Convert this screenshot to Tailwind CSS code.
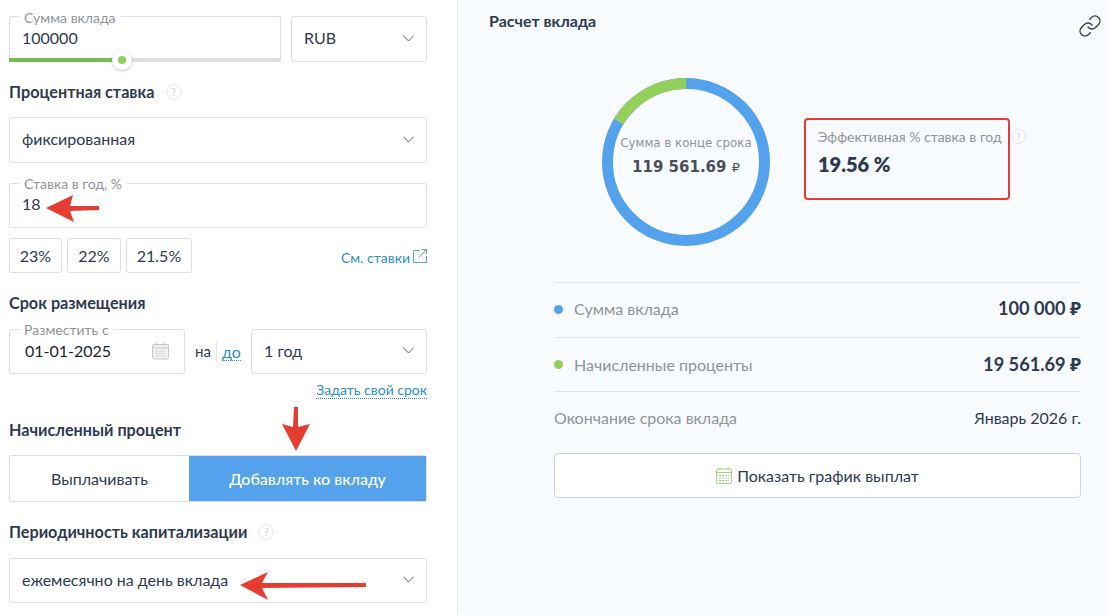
<!DOCTYPE html>
<html lang="ru">
<head>
<meta charset="utf-8">
<title>Расчет вклада</title>
<script src="https://cdn.jsdelivr.net/npm/@tailwindcss/browser@4"></script>
</head>
<body class="bg-white overflow-hidden text-[#2e3a4f] font-['Lato','Noto_Sans',sans-serif]">
<div class="relative flex w-[1109px] h-[615px] overflow-hidden">

  <!-- left form -->
  <div class="w-[458px] h-full shrink-0 pl-[9px] pr-[30px] pt-[16px] border-r border-[#e6e9ee]">
    <div class="flex gap-[10px]">
      <div class="relative w-[272px] h-[46px] border border-[#dcdfe4] border-b-0 rounded-t-[3px] pl-[12px] pt-[10px] text-[16px] leading-[22px]">
        <span class="absolute left-[9px] -top-[6px] bg-white px-[5px] text-[14px] leading-[14px] text-[#8f949c]">Сумма вклада</span>
        100000
        <div class="absolute -left-px right-[-1px] bottom-0 h-[4px] bg-[#dcdfe4]"></div>
        <div class="absolute -left-px bottom-0 w-[113px] h-[4px] bg-[#76bd51]"></div>
        <div class="absolute left-[102px] bottom-[-8px] w-[20px] h-[20px] rounded-full bg-white shadow-[0_1px_3px_rgba(120,80,140,0.4)] flex items-center justify-center">
          <div class="w-[8px] h-[8px] rounded-full bg-[#94cf5c]"></div>
        </div>
      </div>
      <div class="w-[136px] h-[46px] pb-[2px] border border-[#dcdfe4] rounded-[3px] pl-[12px] pr-[12px] flex items-center justify-between text-[16px]">
        RUB
        <svg width="11" height="7" viewBox="0 0 11 7" fill="none" stroke="#5b6472" stroke-width="1"><path d="M0.5 0.8 5.5 6 10.5 0.8"/></svg>
      </div>
    </div>

    <div class="flex items-center gap-[11px] mt-[20px] h-[20px] text-[16.2px] font-bold">
      Процентная ставка
      <span class="w-[16px] h-[16px] rounded-full border border-[#e2e4e8] text-[11px] font-normal leading-[14px] text-center text-[#d5d8dd]">?</span>
    </div>

    <div class="mt-[15px] h-[46px] pb-[2px] border border-[#dcdfe4] rounded-[3px] pl-[12px] pr-[12px] flex items-center justify-between text-[16px]">
      фиксированная
      <svg width="11" height="7" viewBox="0 0 11 7" fill="none" stroke="#5b6472" stroke-width="1"><path d="M0.5 0.8 5.5 6 10.5 0.8"/></svg>
    </div>

    <div class="relative mt-[20px] h-[45px] border border-[#dcdfe4] rounded-[3px] pl-[12px] pt-[9px] text-[16px] leading-[22px]">
      <span class="absolute left-[9px] -top-[7px] bg-white px-[5px] text-[14px] leading-[14px] text-[#8f949c]">Ставка в год, %</span>
      18
    </div>

    <div class="flex items-center gap-[5px] mt-[10px] text-[16px]">
      <div class="w-[53px] h-[35px] border border-[#dcdfe4] rounded-[3px] flex items-center justify-center">23%</div>
      <div class="w-[54px] h-[35px] border border-[#dcdfe4] rounded-[3px] flex items-center justify-center">22%</div>
      <div class="w-[66px] h-[35px] border border-[#dcdfe4] rounded-[3px] flex items-center justify-center">21.5%</div>
      <div class="ml-auto flex items-center gap-[3px] text-[14px] text-[#2d8fc4]">
        <span class="mt-[4px]">См. ставки</span>
        <svg width="14" height="14" viewBox="0 0 14 14" fill="none" stroke="#5aa5d6" stroke-width="1"><path d="M7 1.5H0.5V13.5H13.5V7M5.5 8.5 13.5 0.5M9 0.5H13.5V5"/></svg>
      </div>
    </div>

    <div class="mt-[20px] h-[20px] flex items-center text-[16.2px] font-bold">Срок размещения</div>

    <div class="flex items-center mt-[16px]">
      <div class="relative w-[176px] h-[45px] pb-[2px] border border-[#dcdfe4] rounded-[3px] pl-[15px] pr-[14px] flex items-center justify-between text-[16px] text-[#1c2430]">
        <span class="absolute left-[9px] -top-[7px] bg-white px-[5px] text-[14px] leading-[14px] text-[#8f949c]">Разместить с</span>
        01-01-2025
        <svg width="18" height="18" viewBox="0 0 18 18" fill="none" stroke="#c4c8ce" stroke-width="1"><rect x="0.5" y="2.5" width="16" height="14.5" rx="1.5" fill="#f1f2f4"/><path d="M0.5 6H16.5M4.5 0.5V3.5M12.5 0.5V3.5"/><path d="M3.5 9H13.5M3.5 11.5H13.5M3.5 14H13.5" stroke-dasharray="2 1.2"/></svg>
      </div>
      <span class="ml-[10px] text-[15px]">на</span>
      <span class="w-px h-[21px] bg-[#e2e4e8] ml-[5px]"></span>
      <span class="ml-[5px] text-[16px] leading-[17px] text-[#2d8fc4] border-b border-dotted border-[#2d8fc4]">до</span>
      <div class="ml-auto w-[176px] h-[45px] pb-[2px] border border-[#dcdfe4] rounded-[3px] pl-[12px] pr-[12px] flex items-center justify-between text-[16px]">
        1 год
        <svg width="11" height="7" viewBox="0 0 11 7" fill="none" stroke="#5b6472" stroke-width="1"><path d="M0.5 0.8 5.5 6 10.5 0.8"/></svg>
      </div>
    </div>

    <div class="flex justify-end mt-[7px]">
      <span class="text-[14px] leading-[17px] text-[#2d8fc4] border-b border-dotted border-[#2d8fc4]">Задать свой срок</span>
    </div>

    <div class="mt-[21px] h-[20px] flex items-center text-[16.2px] font-bold">Начисленный процент</div>

    <div class="flex mt-[15px] h-[47px] text-[16px] border border-[#dcdfe4] rounded-[3px]">
      <div class="w-[179px] flex items-center justify-center">Выплачивать</div>
      <div class="flex-1 bg-[#54a2ec] text-white font-medium flex items-center justify-center">Добавлять ко вкладу</div>
    </div>

    <div class="flex items-center gap-[11px] mt-[20px] h-[20px] text-[16.2px] font-bold">
      Периодичность капитализации
      <span class="w-[16px] h-[16px] rounded-full border border-[#e2e4e8] text-[11px] font-normal leading-[14px] text-center text-[#d5d8dd]">?</span>
    </div>

    <div class="mt-[16px] h-[45px] pb-[2px] border border-[#dcdfe4] rounded-[3px] pl-[12px] pr-[12px] flex items-center justify-between text-[16px]">
      ежемесячно на день вклада
      <svg width="11" height="7" viewBox="0 0 11 7" fill="none" stroke="#5b6472" stroke-width="1"><path d="M0.5 0.8 5.5 6 10.5 0.8"/></svg>
    </div>
  </div>

  <!-- right result panel -->
  <div class="flex-1 h-full bg-[#f8fbff]">
    <div class="flex justify-between pl-[31px] pr-[7px] pt-[11px] h-[56px]">
      <span class="text-[16px] leading-[20px] font-bold">Расчет вклада</span>
      <svg class="mt-[3px]" width="24" height="24" viewBox="0 0 24 24" fill="none" stroke="#3a4456" stroke-width="1.5" stroke-linecap="round" stroke-linejoin="round"><path d="M10 13a5 5 0 0 0 7.54.54l3-3a5 5 0 0 0-7.07-7.07l-1.72 1.71"/><path d="M14 11a5 5 0 0 0-7.54-.54l-3 3a5 5 0 0 0 7.07 7.07l1.71-1.71"/></svg>
    </div>

    <div class="flex ml-[144px] mt-[22px] h-[168px]">
      <div class="relative w-[168px] h-[168px] shrink-0">
        <svg width="168" height="168" viewBox="0 0 168 168" fill="none" stroke-width="11">
          <circle cx="84" cy="84" r="78.5" stroke="#54a2ec"/>
          <path d="M84 5.5A78.5 78.5 0 0 0 16.7 43.6" stroke="#94cf5c"/>
        </svg>
        <div class="absolute inset-0 flex flex-col items-center pt-[56px] font-['DejaVu_Sans',sans-serif]">
          <span class="text-[11.8px] leading-[18px] text-[#8f949c]">Сумма в конце срока</span>
          <span class="mt-[5px] text-[15px] leading-[20px] font-bold text-[#4a4f57]">119 561.69 <span class="text-[13px] font-normal">₽</span></span>
        </div>
      </div>
      <div class="relative ml-[34px] mt-[40px] w-[206px] h-[82px] border-2 border-[#e53d32] rounded-[4px] pl-[12px] pt-[8px]">
        <div class="text-[14px] leading-[18px] text-[#8f949c] whitespace-nowrap">Эффективная % ставка в год</div>
        <div class="mt-[6px] text-[20px] leading-[24px] font-extrabold">19.56 %</div>
        <span class="absolute left-[205px] top-[9px] w-[15px] h-[15px] rounded-full border border-[#e2e4e8] text-[10px] leading-[13px] text-center text-[#d5d8dd]">?</span>
      </div>
    </div>

    <div class="ml-[96px] mr-[28px] mt-[36px]">
      <div class="h-[55px] pb-[2px] border-t border-[#dfe3ea] flex items-center justify-between">
        <span class="flex items-center gap-[11px] text-[16px] text-[#8f949c]"><span class="w-[9px] h-[9px] rounded-full bg-[#54a2ec]"></span>Сумма вклада</span>
        <span class="text-[18.2px] font-bold">100 000 ₽</span>
      </div>
      <div class="h-[54px] border-t border-[#dfe3ea] flex items-center justify-between">
        <span class="flex items-center gap-[11px] text-[16px] text-[#8f949c]"><span class="w-[9px] h-[9px] rounded-full bg-[#94cf5c]"></span>Начисленные проценты</span>
        <span class="text-[18.2px] font-bold">19 561.69 ₽</span>
      </div>
      <div class="h-[62px] pb-[10px] border-t border-[#dfe3ea] flex items-center justify-between text-[16px]">
        <span class="text-[#8f949c]">Окончание срока вклада</span>
        <span class="text-[16px]">Январь 2026 г.</span>
      </div>
      <div class="h-[45px] bg-white border border-[#cfd2d7] rounded-[4px] flex items-center justify-center gap-[5px] text-[16px]">
        <svg width="16" height="17" viewBox="0 0 16 17" fill="none" stroke="#a3d07e" stroke-width="1"><rect x="0.5" y="2" width="15" height="14.5" rx="1.5"/><path d="M0.5 5.5H15.5M4 0.5V3M12 0.5V3"/><path d="M3 8.5H13M3 11H13M3 13.5H13" stroke-dasharray="2 1"/></svg>
        Показать график выплат
      </div>
    </div>
  </div>

  <!-- red annotation arrows -->
  <svg class="absolute left-0 top-0 pointer-events-none" width="1109" height="615" fill="#e53d32" stroke="none">
    <path d="M46 208 73 195 70 206 99 206 99 210 70 211 74 222Z"/>
    <path d="M296 451 282 424 293 427 294 407 298 407 298 427 310 424Z"/>
    <path d="M240 585 268 572 262 583 366 583 366 587 262 588 268 600Z"/>
  </svg>
</div>
</body>
</html>
